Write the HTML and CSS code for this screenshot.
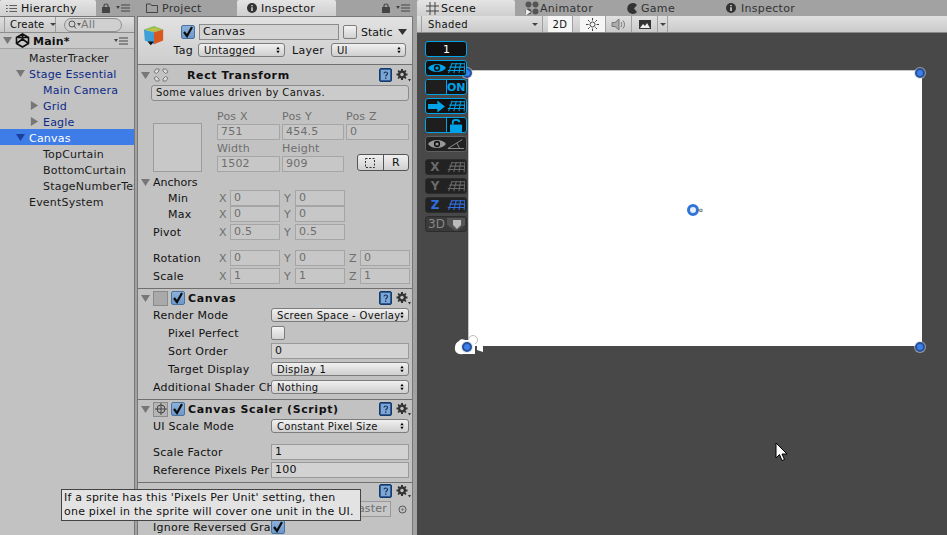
FILE: index.html
```html
<!DOCTYPE html>
<html lang="en">
<head>
  <meta charset="UTF-8">
  <title>Unity Editor</title>
  <link rel="stylesheet" href="styles.css">
</head>
<body>
  <svg class="defs" width="0" height="0">
    <symbol id="down" viewBox="0 0 10 10"><path d="M0 1H10L5 9Z"/></symbol>
    <symbol id="right" viewBox="0 0 10 10"><path d="M1 0V10L9 5Z"/></symbol>
    <symbol id="spin" viewBox="0 0 6 10"><path d="M3 0L5.500 4H.5ZM3 10L.5 6H5.500Z"/></symbol>
    <symbol id="help" viewBox="0 0 13 14">
      <rect x=".5" y=".5" width="12" height="13" rx="1.500" fill="#2c5d97" stroke="#173a66"/>
      <rect x="2" y="2" width="9" height="10" fill="#7ea6d4"/>
      <path d="M5 5.500C5 3.500 8.500 3.500 8.500 5.500C8.500 7 6.700 7 6.700 8.500M6.700 9.500V11" fill="none" stroke="#14365f" stroke-width="1.200"/>
    </symbol>
    <symbol id="gear" viewBox="0 0 15 14">
      <path d="M5 1H7V2.500L8.200 3L9.500 2L10.500 3L9.500 4.300L10 5.500H11.500V7.500H10L9.500 8.700L10.500 10L9.500 11L8.200 10L7 10.500V12H5V10.500L3.800 10L2.500 11L1.500 10L2.500 8.700L2 7.500H.5V5.500H2L2.500 4.300L1.500 3L2.500 2L3.800 3L5 2.500Z" fill="#333"/>
      <circle cx="6" cy="6.500" r="1.700" fill="#c2c2c2"/>
      <path d="M12 11H15L13.500 13.500Z" fill="#333"/>
    </symbol>
    <symbol id="menu" viewBox="0 0 14 8">
      <path d="M0 2H4L2 5Z" fill="#444"/>
      <path d="M5 1H14M5 4H14M5 7H14" stroke="#444" stroke-width="1"/>
    </symbol>
    <symbol id="lock" viewBox="0 0 8 10">
      <path d="M2 4V2.500C2 .5 6 .5 6 2.500V4" fill="none" stroke="#444" stroke-width="1.200"/>
      <rect y="4" width="8" height="6" fill="#444"/>
    </symbol>
    <symbol id="check" viewBox="0 0 12 12">
      <path d="M2 6L5 10L10 1" fill="none" stroke="#0c0c0c" stroke-width="2.200"/>
    </symbol>
    <symbol id="grid" viewBox="0 0 22 14">
      <path d="M3 13L7 1M9 13L12 1M15 13L17 1M21 13L22 1M2 10H21M4 6H21.500M6 2H22" fill="none" stroke="currentColor" stroke-width="1.200"/>
    </symbol>
    <symbol id="eye" viewBox="0 0 20 12">
      <path d="M0 6C4 0 16 0 20 6C16 12 4 12 0 6Z" fill="currentColor"/>
      <circle cx="10" cy="6" r="3.500" fill="#111"/>
      <circle cx="10" cy="6" r="1.800" fill="currentColor"/>
    </symbol>
  </svg>

  <div class="editor">
    <section class="pane hierarchy">
      <div class="tabs">
        <div class="tab active hier-tab">
          <svg class="tab-ico" width="11" height="9" viewBox="0 0 13 9"><path d="M0 1H2M0 4.500H2M0 8H2M4 1H13M4 4.500H13M4 8H13" stroke="#444"/></svg>
          Hierarchy
        </div>
        <div class="tab-tools"><svg width="8" height="10"><use href="#lock"/></svg><svg width="14" height="8"><use href="#menu"/></svg></div>
      </div>
      <div class="hier-body">
        <div class="hier-bar">
          <span class="create">Create <i class="caret"></i></span>
          <span class="search">
            <svg width="13" height="9" viewBox="0 0 13 9"><circle cx="4" cy="4" r="3" fill="none" stroke="#555"/><path d="M6 6L8 8.500" stroke="#555"/><path d="M9 3H13L11 6Z" fill="#555"/></svg>
            All
          </span>
        </div>
        <div class="scene-row">
          <svg class="arrow" width="9" height="9"><use href="#down"/></svg>
          <svg width="15" height="15" viewBox="0 0 15 15"><path d="M7.500 1L13.500 4.500V10.500L7.500 14L1.500 10.500V4.500ZM7.500 1V6L1.500 10.500M7.500 6L13.500 10.500M13.500 4.500L3 4.500" fill="none" stroke="#111" stroke-width="1.600"/></svg>
          <b>Main*</b>
          <svg class="row-menu" width="14" height="8"><use href="#menu"/></svg>
        </div>
        <div class="node d1">MasterTracker</div>
        <div class="node d1 prefab"><svg class="arrow" width="9" height="9"><use href="#down"/></svg>Stage Essential</div>
        <div class="node d2 prefab">Main Camera</div>
        <div class="node d2 prefab"><svg class="arrow" width="9" height="9"><use href="#right"/></svg>Grid</div>
        <div class="node d2 prefab"><svg class="arrow" width="9" height="9"><use href="#right"/></svg>Eagle</div>
        <div class="node d1 selected"><svg class="arrow" width="9" height="9"><use href="#down"/></svg>Canvas</div>
        <div class="node d2">TopCurtain</div>
        <div class="node d2">BottomCurtain</div>
        <div class="node d2">StageNumberText</div>
        <div class="node d1">EventSystem</div>
      </div>
    </section>

    <section class="pane inspector">
      <div class="tabs">
        <div class="tab project-tab">
          <svg class="tab-ico" width="12" height="10" viewBox="0 0 12 10"><path d="M.5 9.500V1H4.500L5.500 2.500H11.500V9.500Z" fill="none" stroke="#444"/></svg>
          Project
        </div>
        <div class="tab active insp-tab">
          <svg class="tab-ico" width="10" height="10" viewBox="0 0 10 10"><circle cx="5" cy="5" r="5" fill="#333"/><path d="M5 2V3.200M5 4.300V8" stroke="#ddd" stroke-width="1.500"/></svg>
          Inspector
        </div>
        <div class="tab-tools"><svg width="8" height="10"><use href="#lock"/></svg><svg width="14" height="8"><use href="#menu"/></svg></div>
      </div>
      <div class="insp-body">
        <header class="obj-head">
          <svg class="cube" width="22" height="22" viewBox="0 0 24 24">
            <path d="M1 5L12 1L22 5L12 8Z" fill="#8fbf5a"/>
            <path d="M1 5L12 8V21L2 17Z" fill="#3f9fd8"/>
            <path d="M12 8L22 5V17L12 21Z" fill="#d9581f"/>
            <path d="M3 6L12 3L19 5L12 7Z" fill="#d8c23a" opacity=".7"/>
            <path d="M5 18H12L8.500 22Z" fill="#111"/>
          </svg>
          <div class="obj-rows">
            <div class="obj-row">
              <span class="check on"><svg width="12" height="12"><use href="#check"/></svg></span>
              <span class="name-field">Canvas</span>
              <span class="check static"></span>
              <span class="static-label">Static</span>
              <svg class="static-arrow" width="9" height="6" viewBox="0 0 9 6"><path d="M0 0H9L4.500 6Z" fill="#333"/></svg>
            </div>
            <div class="obj-row second">
              <span class="tag-label">Tag</span>
              <span class="select tag-select">Untagged<svg width="4" height="8"><use href="#spin"/></svg></span>
              <span class="layer-label">Layer</span>
              <span class="select layer-select">UI<svg width="4" height="8"><use href="#spin"/></svg></span>
            </div>
          </div>
        </header>

        <div class="comp rect-comp">
          <div class="comp-head">
            <svg class="arrow" width="9" height="9"><use href="#down"/></svg>
            <svg class="comp-ico" width="16" height="16" viewBox="0 0 16 16"><path d="M1 5L3 2H6V4L3.500 6.500ZM15 5L13 2H10V4L12.500 6.500ZM1 11L3 14H6V12L3.500 9.500ZM15 11L13 14H10V12L12.500 9.500Z" fill="#ddd" stroke="#666" stroke-width=".8"/></svg>
            <b class="rect-title">Rect Transform</b>
            <span class="head-tools"><svg width="13" height="14"><use href="#help"/></svg><svg width="15" height="14"><use href="#gear"/></svg></span>
          </div>
          <div class="helpbox">Some values driven by Canvas.</div>
          <div class="rect-top">
            <div class="anchor-box"></div>
            <div class="rect-grid">
              <span class="cap">Pos X</span><span class="cap">Pos Y</span><span class="cap">Pos Z</span>
              <span class="field off">751</span><span class="field off">454.5</span><span class="field off">0</span>
              <span class="cap">Width</span><span class="cap">Height</span><span></span>
              <span class="field off">1502</span><span class="field off">909</span>
              <span class="btn-pair">
                <span><svg width="10" height="10" viewBox="0 0 10 10"><rect x=".5" y=".5" width="9" height="9" fill="none" stroke="#333" stroke-dasharray="2 1.500"/></svg></span>
                <span>R</span>
              </span>
            </div>
          </div>
          <div class="row anchors"><svg class="arrow" width="9" height="9"><use href="#down"/></svg>Anchors</div>
          <div class="row vec"><label class="ind">Min</label><span class="ax">X</span><span class="field off">0</span><span class="ax">Y</span><span class="field off">0</span></div>
          <div class="row vec"><label class="ind">Max</label><span class="ax">X</span><span class="field off">0</span><span class="ax">Y</span><span class="field off">0</span></div>
          <div class="row vec after-gap"><label>Pivot</label><span class="ax">X</span><span class="field off">0.5</span><span class="ax">Y</span><span class="field off">0.5</span></div>
          <div class="row vec spaced"><label>Rotation</label><span class="ax">X</span><span class="field off">0</span><span class="ax">Y</span><span class="field off">0</span><span class="ax">Z</span><span class="field off">0</span></div>
          <div class="row vec after-gap"><label>Scale</label><span class="ax">X</span><span class="field off">1</span><span class="ax">Y</span><span class="field off">1</span><span class="ax">Z</span><span class="field off">1</span></div>
        </div>

        <div class="comp canvas-comp">
          <div class="comp-head">
            <svg class="arrow" width="9" height="9"><use href="#down"/></svg>
            <span class="thumb"></span>
            <span class="check on"><svg width="12" height="12"><use href="#check"/></svg></span>
            <b>Canvas</b>
            <span class="head-tools"><svg width="13" height="14"><use href="#help"/></svg><svg width="15" height="14"><use href="#gear"/></svg></span>
          </div>
          <div class="row"><label>Render Mode</label><span class="select wide">Screen Space - Overlay<svg width="4" height="8"><use href="#spin"/></svg></span></div>
          <div class="row"><label class="ind">Pixel Perfect</label><span class="check"></span></div>
          <div class="row"><label class="ind">Sort Order</label><span class="field">0</span></div>
          <div class="row"><label class="ind">Target Display</label><span class="select wide">Display 1<svg width="4" height="8"><use href="#spin"/></svg></span></div>
          <div class="row"><label>Additional Shader Channels</label><span class="select wide">Nothing<svg width="4" height="8"><use href="#spin"/></svg></span></div>
        </div>

        <div class="comp scaler-comp">
          <div class="comp-head">
            <svg class="arrow" width="9" height="9"><use href="#down"/></svg>
            <span class="thumb target"><svg width="12" height="12" viewBox="0 0 12 12"><circle cx="6" cy="6" r="4" fill="none" stroke="#444"/><path d="M6 0V12M0 6H12" stroke="#444"/></svg></span>
            <span class="check on"><svg width="12" height="12"><use href="#check"/></svg></span>
            <b>Canvas Scaler (Script)</b>
            <span class="head-tools"><svg width="13" height="14"><use href="#help"/></svg><svg width="15" height="14"><use href="#gear"/></svg></span>
          </div>
          <div class="row"><label>UI Scale Mode</label><span class="select wide">Constant Pixel Size<svg width="4" height="8"><use href="#spin"/></svg></span></div>
          <div class="row spaced"><label>Scale Factor</label><span class="field">1</span></div>
          <div class="row"><label>Reference Pixels Per Unit</label><span class="field">100</span></div>
        </div>

        <div class="comp last-comp">
          <div class="comp-head">
            <span class="head-tools"><svg width="13" height="14"><use href="#help"/></svg><svg width="15" height="14"><use href="#gear"/></svg></span>
          </div>
          <div class="row after-gap"><span class="field master">Master</span><svg class="dot" width="9" height="9" viewBox="0 0 9 9"><circle cx="4.500" cy="4.500" r="3.500" fill="none" stroke="#555"/><circle cx="4.500" cy="4.500" r="1" fill="#555"/></svg></div>
          <div class="row"><label>Ignore Reversed Graphics</label><span class="check on"><svg width="12" height="12"><use href="#check"/></svg></span></div>
        </div>
      </div>
    </section>

    <section class="pane scene">
      <div class="tabs">
        <div class="tab active scene-tab">
          <svg class="tab-ico" width="13" height="13" viewBox="0 0 13 13"><path d="M4 0V13M9 0V13M0 4H13M0 9H13" stroke="#444"/></svg>
          Scene
        </div>
        <div class="tab anim-tab">
          <svg class="tab-ico" width="14" height="14" viewBox="0 0 14 14"><circle cx="3.500" cy="3.500" r="3" fill="#555"/><circle cx="10.500" cy="3.500" r="3" fill="#555"/><circle cx="10.500" cy="10.500" r="3" fill="#555"/><circle cx="3.500" cy="10.500" r="3" fill="#555"/><path d="M1 8L6 11L1 14Z" fill="#eee"/></svg>
          Animator
        </div>
        <div class="tab game-tab">
          <svg class="tab-ico" width="11" height="11" viewBox="0 0 11 11"><path d="M10 2A5.500 5.500 0 1 0 10 9L7 5.500Z" fill="#333"/></svg>
          Game
        </div>
        <div class="tab insp2-tab">
          <svg class="tab-ico" width="10" height="10" viewBox="0 0 10 10"><circle cx="5" cy="5" r="5" fill="#333"/><path d="M5 2V3.200M5 4.300V8" stroke="#ddd" stroke-width="1.500"/></svg>
          Inspector
        </div>
      </div>
      <div class="scene-bar">
        <span class="tool shaded">Shaded<i class="caret"></i></span>
        <span class="tool mode">2D</span>
        <span class="tool light"><svg width="13" height="13" viewBox="0 0 13 13"><circle cx="6.500" cy="6.500" r="2.500" fill="none" stroke="#444"/><path d="M6.500 0V2.500M6.500 10.500V13M0 6.500H2.500M10.500 6.500H13M2 2L3.700 3.700M9.300 9.300L11 11M2 11L3.700 9.300M9.300 3.700L11 2" stroke="#444"/></svg></span>
        <span class="tool audio"><svg width="15" height="13" viewBox="0 0 15 13"><path d="M1 4.500H4L8 1V12L4 8.500H1Z" fill="#aaa" stroke="#777"/><path d="M10 4C11 5.500 11 7.500 10 9M12 2.500C14 5 14 8 12 10.500" fill="none" stroke="#777"/></svg></span>
        <span class="tool fx"><svg width="12" height="9" viewBox="0 0 12 9"><rect width="12" height="9" fill="#333"/><path d="M1 8L4 4L6 6L8 3L11 8Z" fill="#eee"/></svg></span>
        <span class="tool fx-arrow"><i class="caret"></i></span>
      </div>
      <div class="viewport">
        <div class="ui-rect"></div>
        <i class="handle tl"></i><i class="handle tr"></i><i class="handle br"></i>
        <svg class="cam-ico" width="30" height="22" viewBox="0 0 30 22"><circle cx="19" cy="5" r="4.500" fill="none" stroke="#bbb"/><path d="M5 6C6 4 9 4 11 5H21V19H9C4 20 0 17 1 12C1 9 3 7 5 6ZM23 11L29 8V17L23 15Z" fill="#fff"/></svg>
        <i class="handle bl"></i>
        <div class="pivot"><span class="ring"></span><span class="tail">o</span></div>
        <div class="gizmos">
          <div class="giz one">1</div>
          <div class="giz cyan"><svg width="18" height="12"><use href="#eye"/></svg><svg width="19" height="14"><use href="#grid"/></svg></div>
          <div class="giz cyan split"><span></span><b>ON</b></div>
          <div class="giz cyan"><svg width="17" height="13" viewBox="0 0 20 14"><path d="M0 4H11V0L20 7L11 14V10H0Z" fill="currentColor"/></svg><svg width="19" height="14"><use href="#grid"/></svg></div>
          <div class="giz cyan split"><span></span><svg width="15" height="13" viewBox="0 0 16 14"><path d="M4 6V3.500C4 0 11 0 11 3.500" fill="none" stroke="currentColor" stroke-width="2"/><rect x="1" y="6" width="13" height="8" fill="currentColor"/></svg></div>
          <div class="giz grey"><svg width="18" height="12"><use href="#eye"/></svg><svg width="18" height="12" viewBox="0 0 20 12"><path d="M1 11H19M1 11L17 1M11 5L14 11" fill="none" stroke="currentColor"/></svg></div>
          <div class="giz grey axis gap"><b>X</b><svg width="19" height="14"><use href="#grid"/></svg></div>
          <div class="giz grey axis"><b>Y</b><svg width="19" height="14"><use href="#grid"/></svg></div>
          <div class="giz blue axis"><b>Z</b><svg width="19" height="14"><use href="#grid"/></svg></div>
          <div class="giz grey threed"><b>3D</b><svg width="18" height="14" viewBox="0 0 18 14"><path d="M0 1H18V8L9 14L0 8Z" fill="#555"/><path d="M6 3H14V8L10 12L6 8Z" fill="#bbb"/></svg></div>
        </div>
        <svg class="pointer" width="13" height="20" viewBox="0 0 13 20"><path d="M1 1V16L4.500 12.500L7 18.500L9.500 17.500L7 12H12Z" fill="#fff" stroke="#000"/></svg>
      </div>
    </section>
  </div>

  <div class="tooltip">If a sprite has this 'Pixels Per Unit' setting, then<br>one pixel in the sprite will cover one unit in the UI.</div>
</body>
</html>
```
FILE: styles.css
```css
html, body {
  margin: 0;
  height: 100%;
  overflow: hidden;
}
body {
  background: #a2a2a2;
  font-family: "DejaVu Sans", sans-serif;
  font-size: 11px;
  color: #111;
  position: relative;
}
.defs { position: absolute; }
svg { display: block; flex: none; }

.editor {
  display: flex;
  height: 535px;
}
.pane { display: flex; flex-direction: column; }
.hierarchy { width: 135px; }
.inspector { width: 280px; margin-left: 0; }
.scene { width: 530px; margin-left: 2px; }

/* tab strips */
.tabs {
  display: flex;
  height: 16px;
  flex: none;
  position: relative;
}
.tab {
  display: flex;
  align-items: center;
  gap: 4px;
  font-size: 11px;
  letter-spacing: .3px;
  color: #333;
  height: 16px;
  white-space: nowrap;
}
.tab.active {
  background: linear-gradient(#e4e4e4, #cfcfcf);
  border-radius: 2px 2px 0 0;
  color: #111;
}
.tab-tools {
  margin-left: auto;
  display: flex;
  align-items: center;
  gap: 6px;
  padding-right: 5px;
}
.hier-tab { width: 90px; padding-left: 6px; }
.project-tab { width: 91px; padding-left: 11px; }
.insp-tab { width: 89px; padding-left: 10px; }
.scene-tab { width: 89px; padding-left: 9px; margin-right: 10px; gap: 2px; }
.anim-tab { width: 100px; gap: 1px; }
.game-tab { width: 98px; padding-left: 2px; gap: 3px; }
.insp2-tab { padding-left: 1px; gap: 5px; }

/* hierarchy */
.hier-body {
  flex: 1;
  background: #c2c2c2;
  border-top: 1px solid #777;
  border-right: 1px solid #777;
}
.hier-bar {
  display: flex;
  align-items: center;
  height: 15px;
  background: linear-gradient(#dedede, #c8c8c8);
  border-bottom: 1px solid #8c8c8c;
}
.create {
  display: flex;
  align-items: center;
  gap: 6px;
  width: 52px;
  height: 15px;
  margin-left: 4px;
  padding-left: 5px;
  box-sizing: border-box;
  font-size: 10px;
  letter-spacing: .2px;
  border: solid #9d9d9d;
  border-width: 0 1px;
}
.caret {
  width: 0;
  height: 0;
  border: 3px solid transparent;
  border-top: 3px solid #444;
  border-bottom: 0;
  display: block;
}
.search {
  display: flex;
  align-items: center;
  margin-left: 8px;
  width: 58px;
  height: 14px;
  box-sizing: border-box;
  padding-left: 3px;
  border: 1px solid #8f8f8f;
  border-radius: 7px;
  background: #d0d0d0;
  color: #777;
  letter-spacing: .2px;
}
.scene-row {
  display: flex;
  align-items: center;
  gap: 3px;
  height: 16px;
  padding-left: 3px;
  background: #c9c9c9;
  border-bottom: 1px solid #a4a4a4;
  box-sizing: border-box;
}
.scene-row b { letter-spacing: .2px; margin-top: 2px; }
.row-menu { margin-left: auto; margin-right: 6px; }
.arrow { fill: #777; flex: none; }
.node {
  position: relative;
  height: 16px;
  line-height: 20px;
  white-space: nowrap;
  overflow: hidden;
  letter-spacing: .2px;
  color: #1a1a1a;
}
.node .arrow { position: absolute; top: 4px; margin-left: -13px; }
.d1 { padding-left: 29px; }
.d2 { padding-left: 43px; }
.prefab { color: #0c2a86; }
.selected { background: #3e7de7; color: #fff; }
.selected .arrow { fill: #1c3f9e; }

/* inspector */
.insp-body {
  flex: 1;
  margin: 0 2px;
  background: #c2c2c2;
  border: solid #777;
  border-width: 1px 1px 0;
}
.obj-head {
  display: flex;
  height: 48px;
  box-sizing: border-box;
  background: linear-gradient(#e2e2e2, #cdcdcd);
  border-bottom: 1px solid #6f6f6f;
  padding: 3px 0 0 5px;
}
.cube { margin-top: 5px; }
.obj-rows { margin-left: 16px; flex: 1; }
.obj-row {
  display: flex;
  align-items: center;
  height: 18px;
  margin-top: 3px;
}
.obj-row.second { margin-top: 0; }
.check {
  display: flex;
  align-items: center;
  justify-content: center;
  width: 12px;
  height: 12px;
  flex: none;
  border-radius: 2px;
  border: 1px solid #7d7d7d;
  background: linear-gradient(#f3f3f3, #d2d2d2);
}
.check.on { background: linear-gradient(#8cb2dc, #6b97c9); border-color: #49729f; }
.name-field {
  width: 135px;
  height: 14px;
  margin-left: 4px;
  padding-left: 3px;
  line-height: 14px;
  letter-spacing: .3px;
  border: 1px solid #8b8b8b;
  background: #d4d4d4;
}
.check.static { margin-left: 4px; }
.static-label { margin-left: 4px; }
.static-arrow { margin-left: 6px; }
.tag-label { width: 26px; margin-left: -14px; text-align: right; letter-spacing: .3px; }
.layer-label { margin-left: 7px; width: 39px; letter-spacing: .3px; }
.select {
  display: flex;
  align-items: center;
  justify-content: space-between;
  box-sizing: border-box;
  height: 14px;
  padding: 0 4px 0 5px;
  font-size: 10px;
  letter-spacing: .3px;
  background: linear-gradient(#f0f0f0, #cfcfcf);
  border: 1px solid #7d7d7d;
  border-radius: 3px;
  white-space: nowrap;
}
.tag-select { width: 87px; margin-left: 5px; }
.layer-select { width: 75px; }
.wide { width: 138px; }

.comp {
  box-sizing: border-box;
  border-bottom: 1px solid #6f6f6f;
  padding-top: 1px;
}
.comp-head {
  display: flex;
  align-items: center;
  height: 16px;
  padding-left: 3px;
  gap: 3px;
}
.comp-head b { letter-spacing: .6px; }
.rect-title { margin-left: 15px; }
.head-tools {
  margin-left: auto;
  margin-right: 1px;
  display: flex;
  align-items: center;
  gap: 4px;
}
.helpbox {
  height: 14px;
  line-height: 14px;
  margin: 2px 3px 0 13px;
  padding-left: 4px;
  font-size: 10px;
  letter-spacing: .4px;
  background: #cbcbcb;
  border: 1px solid #8a8a8a;
  border-radius: 3px;
}
.rect-top {
  display: flex;
  padding-left: 15px;
  margin-top: 7px;
}
.anchor-box {
  width: 47px;
  height: 47px;
  margin-top: 15px;
  border: 1px solid #9c9c9c;
  background: #c8c8c8;
}
.rect-grid {
  display: grid;
  grid-template-columns: 63px 62px 63px;
  grid-template-rows: repeat(4, 16px);
  column-gap: 2px;
  margin-left: 15px;
}
.cap { color: #6e6e6e; letter-spacing: .2px; line-height: 17px; }
.field {
  display: block;
  box-sizing: border-box;
  height: 16px;
  line-height: 14px;
  padding-left: 3px;
  letter-spacing: .2px;
  background: #d2d2d2;
  border: 1px solid #9a9a9a;
  overflow: hidden;
  flex: 1;
}
.field.off { color: #6e6e6e; background: #c7c7c7; border-color: #a5a5a5; }
.btn-pair {
  display: flex;
  justify-self: end;
  width: 52px;
  height: 17px;
  margin-top: -2px;
  border: 1px solid #555;
  border-radius: 3px;
  box-sizing: border-box;
  background: linear-gradient(#f0f0f0, #d0d0d0);
}
.btn-pair span {
  flex: 1;
  display: flex;
  align-items: center;
  justify-content: center;
}
.btn-pair span + span { border-left: 1px solid #555; }

.row {
  display: flex;
  align-items: center;
  height: 16px;
  margin-top: 2px;
  padding: 0 3px 0 15px;
  white-space: nowrap;
}
.comp-head + .row { margin-top: 1px; }
.row label {
  width: 118px;
  flex: none;
  overflow: hidden;
  letter-spacing: .25px;
}
.row label.ind { padding-left: 15px; box-sizing: border-box; }
.row.spaced { margin-top: 10px; }
.anchors { padding-left: 3px; gap: 3px; }
.row.vec { margin-top: 0; }
.row.vec.after-gap { margin-top: 2px; }
.row.vec.spaced { margin-top: 10px; }
.row.after-gap { margin-top: 2px; }
.vec label { width: 64px; }
.vec .ax { width: 13px; flex: none; color: #6e6e6e; padding-left: 2px; box-sizing: border-box; }
.vec .field { flex: none; width: 50px; margin-right: 2px; }
.rect-comp { height: 224px; padding-top: 2px; }
.canvas-comp { height: 111px; }
.scaler-comp { height: 83px; }
.last-comp { border: 0; padding-top: 0; }
.master { flex: none; width: 120px; margin-left: 118px; text-align: right; padding-right: 3px; color: #6e6e6e; background: #c7c7c7; }
.dot { margin-left: 7px; }
.thumb {
  display: flex;
  align-items: center;
  justify-content: center;
  width: 13px;
  height: 13px;
  background: #a9a9a9;
  border: 1px solid #8a8a8a;
}
.thumb.target { background: #b5b5b5; }

/* scene view */
.scene-bar {
  display: flex;
  height: 16px;
  flex: none;
  background: linear-gradient(#e0e0e0, #cacaca);
  border-bottom: 1px solid #8a8a8a;
  padding-left: 4px;
}
.tool {
  display: flex;
  align-items: center;
  justify-content: center;
  box-sizing: border-box;
  border-right: 1px solid #a0a0a0;
  font-size: 10px;
  letter-spacing: .4px;
}
.shaded { width: 122px; justify-content: space-between; padding: 0 4px 0 6px; margin-right: 5px; border-left: 1px solid #a0a0a0; }
.mode { width: 25px; background: #f5f5f5; margin-right: 7px; }
.light { width: 26px; background: #f5f5f5; }
.audio { width: 26px; }
.fx { width: 26px; }
.fx-arrow { width: 10px; }
.viewport {
  flex: 1;
  position: relative;
  background: #484848;
}
.ui-rect {
  position: absolute;
  left: 52px;
  top: 38px;
  width: 453px;
  height: 275px;
  background: #fff;
  box-shadow: 0 -1px 0 #c8c8c8, -1px 0 0 #c8c8c8;
}
.handle {
  position: absolute;
  width: 6px;
  height: 6px;
  border-radius: 50%;
  background: #3d7fe6;
  border: 2px solid #2450a0;
  box-shadow: 0 0 0 1px rgba(210, 210, 210, .6);
}
.tl { left: 45px; top: 35px; }
.tr { left: 498px; top: 35px; }
.bl { left: 45px; top: 309px; }
.br { left: 498px; top: 309px; }
.cam-ico { position: absolute; left: 37px; top: 302px; }
.pivot {
  position: absolute;
  left: 270px;
  top: 171px;
  display: flex;
  align-items: center;
}
.ring {
  width: 6px;
  height: 6px;
  border: 3px solid #2f75d8;
  border-radius: 50%;
  background: #e6eef9;
}
.tail { font-size: 6px; line-height: 6px; color: #222; }
.gizmos {
  position: absolute;
  left: 8px;
  top: 8px;
  display: flex;
  flex-direction: column;
  gap: 3px;
}
.giz {
  display: flex;
  align-items: center;
  justify-content: space-between;
  width: 42px;
  height: 16px;
  box-sizing: border-box;
  padding: 0 1px 0 2px;
  background: #111;
  border: 1px solid #00a2e8;
  border-radius: 3px;
  color: #00a2e8;
  overflow: hidden;
}
.giz.one { justify-content: center; color: #fff; font-size: 11px; }
.giz.grey { border-color: #2c2c2c; color: #6a6a6a; background: #222; }
.giz.grey:nth-child(6) { border-color: #5f5f5f; color: #999; }
.giz.blue { border-color: #2c2c2c; color: #2f6fe0; background: #222; }
.giz.gap { margin-top: 4px; }
.axis b { font-size: 12px; width: 14px; text-align: center; }
.split { padding: 0; }
.split span { width: 20px; height: 14px; border-right: 1px solid #00a2e8; flex: none; background: #1e1e1e; }
.split b { font-size: 11px; margin-right: 1px; }
.split svg { margin-right: 2px; }
.giz.threed { background: #3a3a3a; }
.threed b { font-size: 12px; font-weight: 400; color: #888; }
.pointer { position: absolute; left: 358px; top: 409px; }

.tooltip {
  position: absolute;
  left: 61px;
  top: 489px;
  box-sizing: border-box;
  width: 300px;
  height: 32px;
  padding: 1px 0 0 2px;
  line-height: 14px;
  letter-spacing: .22px;
  white-space: nowrap;
  background: #e3e3e3;
  border: 1px solid #444;
}
```
